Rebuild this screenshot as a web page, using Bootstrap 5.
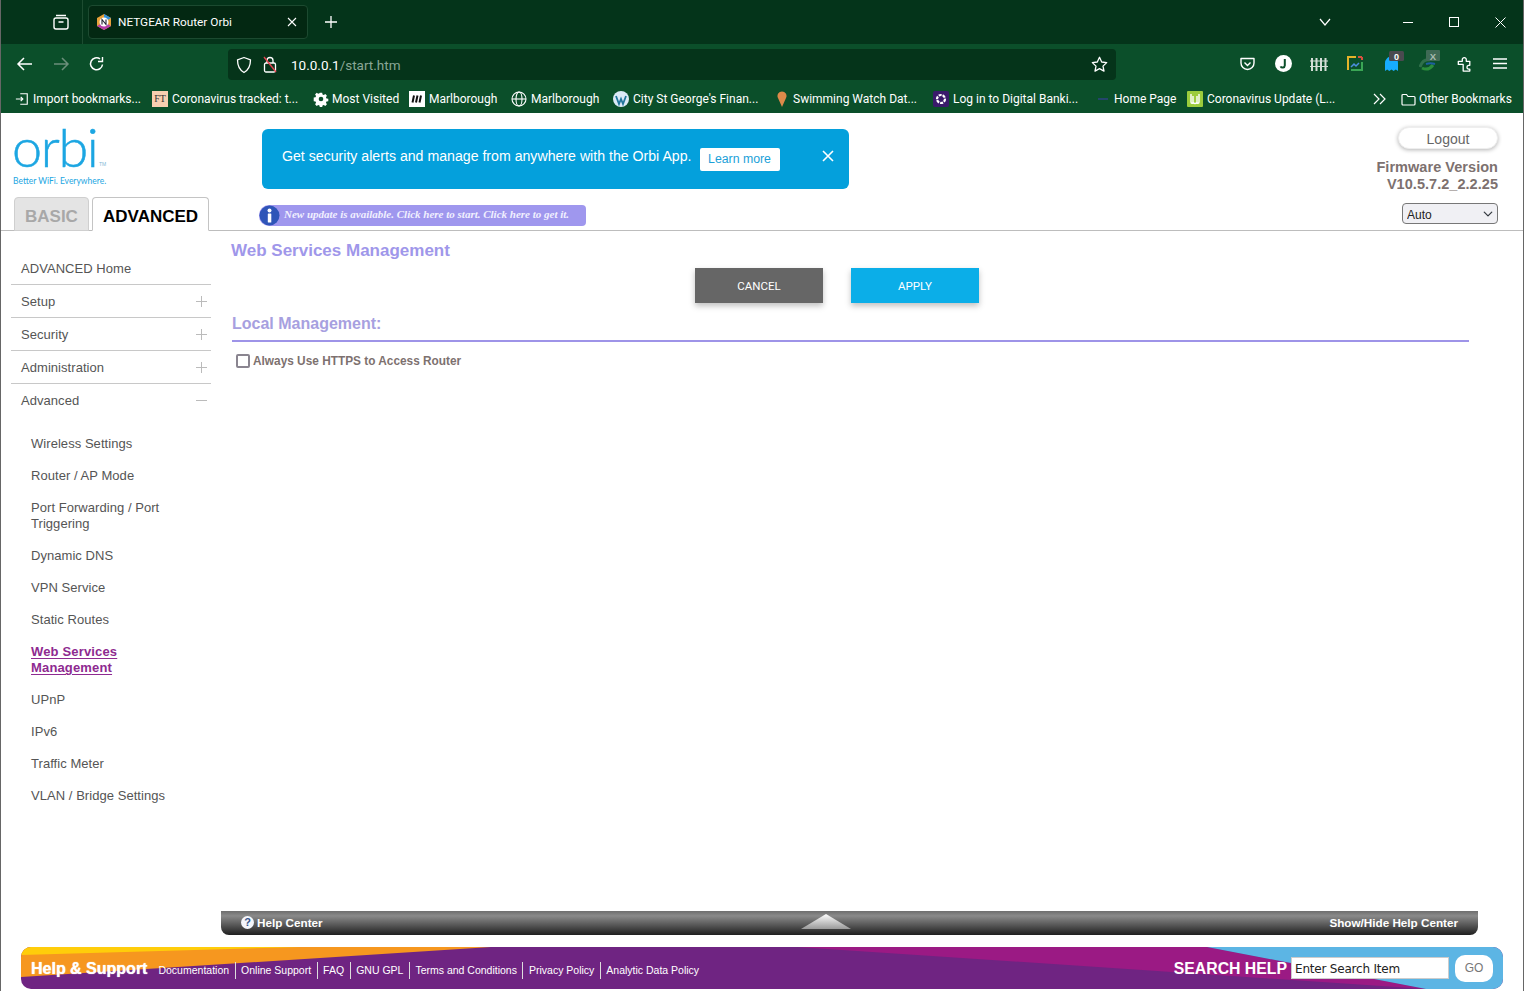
<!DOCTYPE html>
<html lang="en">
<head>
<meta charset="utf-8">
<title>NETGEAR Router Orbi</title>
<link href="https://cdn.jsdelivr.net/npm/bootstrap@5.3.0/dist/css/bootstrap.min.css" rel="stylesheet">
<style>
html,body{height:100%;margin:0;overflow:hidden;background:#fff;font-family:"Liberation Sans",Arial,sans-serif}
.shell{height:991px;display:flex;flex-direction:column;border-left:1px solid #666;border-right:1px solid #666}
.tabstrip{height:44px;background:#04341a;color:#fff;font-family:Roboto,"Noto Sans",sans-serif;font-size:11.8px;padding-top:5px;position:relative}
.tablist-ic{width:82px;border-right:1px solid #1d4c31;margin-top:-5px;height:44px}
.ftab{width:220px;height:34px;margin-left:5px;background:#032812;border:1px solid #1c4a30;border-radius:4px;padding:0 8px 0 7px}
.ftab span{padding-top:2px}
.wbtn{width:46px}
.toolbar{height:37px;background:#0b4f2a;padding-top:5px}
.urlbar{position:absolute;left:228px;top:49px;width:888px;height:31px;background:#05341a;border-radius:4px}
.urltext{font:13.5px Roboto,"Noto Sans",sans-serif;color:#8aa796}
.urltext b{font-weight:400;color:#fff}
.bookmarks{height:32px;background:#0b4f2a;color:#fff;font:12px Roboto,"Noto Sans",sans-serif;padding:4px 0 0 14px}
.bm{flex:0 0 auto;gap:3px;white-space:nowrap}
.bm svg{flex:none}
.w1{width:137px}.w2{width:161px}.w3{width:96px}.w4{width:102px}.w5{width:102px}.w6{width:162px}.w7{width:158px}.w8{width:162px}.w9{width:92px}.w10{width:186px}
.hdr{height:118px;border-bottom:1px solid #bdbdbd;flex:none}
.hdr-left{width:210px;padding-left:12px}
.orbi-mark{height:84px;position:relative;color:#1ca6e2}
.orbi-word{font:300 54px/1 Lato,sans-serif;letter-spacing:-1.4px;position:absolute;left:-1px;top:7px;-webkit-text-stroke:.5px #1ca6e2}
.orbi-tm{font-size:5px;position:absolute;left:86px;top:48px;color:#7fb9d6}
.orbi-tag{font:8.5px Lato,sans-serif;position:absolute;left:0;top:63px}
.rtabs{border:0;gap:3px;padding-left:1px}
.rtabs .nav-link{height:34px;border:1px solid #c4c4c4;border-radius:4px 4px 0 0;font-weight:700;font-size:17px;line-height:37px;padding:0 10px;margin:0}
.rtabs .tab-b{width:75px;background:#e4e4e4;color:#a8a8a8;border-color:#cfcfcf}
.rtabs .tab-a{width:117px;background:#fff;color:#000;border-bottom-color:#fff;position:relative;z-index:1}
.hdr-mid{padding-left:48px}
.promo{width:587px;height:60px;margin:16px 0 0 3px;background:#04a0dc;border-radius:6px;color:#fff;font-size:14.15px;padding-left:20px}
.promo-txt{margin-bottom:5px}
.promo-btn{width:80px;height:23px;padding:0;margin-left:8px;font-size:12.3px;line-height:23px;background:#fff;color:#1c9fd8;border:0;border-radius:2px}
.promo-x{margin:0 0 7px 42px}
.pill{width:327px;height:21px;margin-top:16px;background:#9f97ee;border-radius:10px 4px 4px 10px;font:italic 700 11px/17px "Liberation Serif",serif;color:#f1f0ff;gap:4px}
.pill span{margin-bottom:3px}
.hdr-right{margin-left:auto;padding-right:25px;text-align:right}
.logout{display:block;width:100px;height:22px;margin:14px 0 10px auto;padding:0;background:#fff;border:1px solid #eee;border-radius:11px;box-shadow:0 1px 4px rgba(0,0,0,.3);color:#666;font-size:14px;line-height:22px}
.fw{font-weight:700;font-size:14.5px;letter-spacing:.04px;line-height:17px;color:#7d716f}
.sel{width:96px;height:21px;margin:10px 0 0 auto;padding:2px 0 0 4px;font-size:12px;line-height:18px;color:#222;background-color:#f0f0f4;border:1px solid #777;border-radius:4px;background-position:right 4px center;background-size:10px}
.mainrow{flex:1 1 auto;min-height:0}
.sidenav{width:210px;flex:none;padding:21px 0 0 10px;font-size:13px;letter-spacing:.05px;color:#555}
.sidenav .list-group-item{height:33px;padding:1px 4px 0 10px;border:0;border-bottom:1px solid #c8c8c8;border-radius:0;color:#555;background:none;font-size:13px;line-height:32px}
.sub{margin-top:11px;padding-left:20px;font-size:13px;line-height:16px}
.sub a{display:block;padding:8px 30px 8px 0;color:#555;text-decoration:none}
.sub a span{color:#8e2a90;font-weight:700;letter-spacing:.16px;text-decoration:underline;text-underline-offset:2px}
.pagebody{padding:9px 0 0 20px;flex:1 1 auto}
.ptitle{font-size:17px;font-weight:700;line-height:22px;color:#9f97ea;margin:0}
.actions{margin:6px 0 0 464px;gap:28px}
.actions .btn{width:128px;height:35px;padding:1px 0 0;border:0;border-radius:0;font:11.5px Roboto,sans-serif;color:#fff;box-shadow:0 3px 6px rgba(0,0,0,.25)}
.btn-cx{background:#666}
.btn-ap{background:#0baee8}
.sect{width:1237px;margin:10px 0 0 1px;padding:1px 0 6px;border-bottom:2px solid #9e94e8;font-size:16px;font-weight:700;line-height:20px;color:#a7a0e0}
.chkrow{margin:11px 0 0 5px;gap:3px;font-size:11.85px;font-weight:700;color:#7d716f}
.chkrow .form-check-input{width:14px;height:14px;margin:0 0 3px;border:2px solid #8a8590;border-radius:2px}
.chkrow span{margin-bottom:1px}
.helpbar{height:24px;margin:0 45px 12px 220px;flex:none;background:linear-gradient(#6e6e6e,#8a8a8a 20%,#555 60%,#1f1f1f);border-radius:0 0 8px 8px;color:#fff;font-size:11.7px;font-weight:700;padding:0 20px;position:relative}
.helpq{width:13px;height:13px;border-radius:50%;background:#f4f6fb;color:#34548a;font-size:11px;line-height:13px;text-align:center;margin-right:3px}
.tri{position:absolute;left:580px;top:3px}
.footbar{height:42px;margin:0 20px 2px 20px;flex:none;position:relative;background:#6f2482;border-radius:10px;overflow:hidden;color:#fff}
.footbg{position:absolute;inset:0;width:100%;height:100%}
.footin{position:relative;height:100%;padding-left:10px}
.hs{font-size:16px;font-weight:700;margin:2px 11px 0 0;text-shadow:0 0 1px #fff}
.flinks{margin-top:4px}
.flinks a{color:#fff;text-decoration:none;font-size:10.5px;padding:0 5.5px;border-left:1px solid #ddd;line-height:17px;display:block}
.flinks a:first-child{border-left:0;padding-left:0}
.srch{margin-left:auto;padding-right:10px}
.srch b{font-size:15.8px;margin:2px 4px 0 0}
.srch input{width:158px;height:22px;border:1px solid #ccc;border-radius:0;padding:2px 3px 0;font:12px "DejaVu Sans",sans-serif;color:#222;letter-spacing:-.2px}
.gobtn{width:38px;height:27px;margin-left:6px;padding:0;border:0;background:#fff;border-radius:10px;color:#777;font-size:12px}
</style>
</head>
<body>
<div class="shell">
  <div class="tabstrip d-flex align-items-start">
    <div class="tablist-ic d-flex align-items-center justify-content-end flex-none"><svg width="18" height="18" viewBox="0 0 18 18" fill="none" stroke="#fff" stroke-width="1.4" style="margin-right:12px"><rect x="2" y="5" width="14" height="11" rx="2"/><path d="M4 2.500h10M6.500 9h5"/></svg></div>
    <div class="ftab d-flex align-items-center">
      <svg width="16" height="16" viewBox="0 0 16 16"><path d="M8 0l7 4v8l-7 4-7-4V4z" fill="#e8a13a"/><path d="M8 0l7 4-7 4z" fill="#2f8fd8"/><path d="M1 12l7 4 7-4-7-4z" fill="#b53ea8"/><circle cx="8" cy="8" r="4.500" fill="#fff"/><path d="M6 10.500v-5l4 5v-5" fill="none" stroke="#223" stroke-width="1.100"/></svg>
      <span style="margin-left:6px">NETGEAR Router Orbi</span>
      <svg class="ms-auto" width="10" height="10" viewBox="0 0 10 10" stroke="#fff" stroke-width="1.100" style="margin-right:2px"><path d="M1 1l8 8M9 1l-8 8"/></svg>
    </div>
    <svg style="margin:10px 0 0 16px" width="14" height="14" viewBox="0 0 14 14" stroke="#fff" stroke-width="1.300"><path d="M7 1v12M1 7h12"/></svg>
    <div class="ms-auto d-flex align-items-center" style="height:34px">
      <svg width="12" height="8" viewBox="0 0 12 8" fill="none" stroke="#fff" stroke-width="1.200" style="margin-right:54px"><path d="M1 1l5 6 5-6"/></svg>
      <div class="wbtn d-flex justify-content-center"><svg width="10" height="10" stroke="#fff"><path d="M0 5.500h10"/></svg></div>
      <div class="wbtn d-flex justify-content-center"><svg width="10" height="10" fill="none" stroke="#fff"><rect x=".5" y=".5" width="9" height="9"/></svg></div>
      <div class="wbtn d-flex justify-content-center"><svg width="11" height="11" stroke="#fff"><path d="M.5.5l10 10M10.500.5l-10 10"/></svg></div>
    </div>
  </div>
  <div class="toolbar position-relative d-flex align-items-start flex-none">
    <svg style="position:absolute;left:15px;top:12px" width="18" height="16" viewBox="0 0 18 16" fill="none" stroke="#fff" stroke-width="1.500"><path d="M16 8H2M8 2L2 8l6 6"/></svg>
    <svg style="position:absolute;left:51px;top:12px" width="18" height="16" viewBox="0 0 18 16" fill="none" stroke="#6c8f7b" stroke-width="1.500"><path d="M2 8h14M10 2l6 6-6 6"/></svg>
    <svg style="position:absolute;left:88px;top:12px" width="16" height="16" viewBox="0 0 16 16" fill="none" stroke="#fff" stroke-width="1.500"><path d="M13.500 8.500A6 6 0 1 1 11 2.800"/><path d="M13.500 1v4.500H9" stroke-width="1.400"/></svg>
    <svg style="position:absolute;left:1238px;top:12px" width="17" height="16" viewBox="0 0 17 16" fill="none" stroke="#fff" stroke-width="1.400"><path d="M2 2.500h13V7a6.500 6.500 0 0 1-13 0z" stroke-linejoin="round"/><path d="M5.500 6.500l3 3 3-3"/></svg>
    <svg style="position:absolute;left:1273px;top:10px" width="19" height="19" viewBox="0 0 19 19"><circle cx="9.500" cy="9.500" r="8.500" fill="#fff"/><path d="M10.800 5v6.500a2.200 2.200 0 0 1-4.200.8" fill="none" stroke="#0b4f2a" stroke-width="2"/></svg>
    <svg style="position:absolute;left:1309px;top:13px" width="18" height="14" viewBox="0 0 18 14" stroke="#d5ded8" stroke-width="2" fill="none"><path d="M2 1v13M6.500 1v13M11 1v13M15.500 1v13"/><path d="M0 4h18M0 9.500h18" stroke-width="1.200"/></svg>
    <svg style="position:absolute;left:1346px;top:12px" width="16" height="15" viewBox="0 0 16 15" fill="none"><path d="M1 14V1h8" stroke="#e5b32a" stroke-width="2"/><path d="M15 6v8H4" stroke="#3aa655" stroke-width="2"/><path d="M15 1h-4M15 1v3" stroke="#d9503f" stroke-width="2"/><path d="M4 11l3-3 2 2 3-3" stroke="#4c8fe0" stroke-width="1.500"/></svg>
    <svg style="position:absolute;left:1384px;top:13px" width="13" height="14" viewBox="0 0 13 14"><path d="M0 14V6a6 6 0 0 1 13 0v8l-2.200-1.500-2.200 1.500-2.100-1.500-2.200 1.500-2.100-1.500z" fill="#17adff"/></svg>
    <svg style="position:absolute;left:1388px;top:7px" width="15" height="10" viewBox="0 0 15 10"><rect width="15" height="10" rx="1.500" fill="#4a4a50"/><text x="7.500" y="8.500" text-anchor="middle" font-size="9" font-weight="700" font-family="Liberation Sans" fill="#fff">0</text></svg>
    <svg style="position:absolute;left:1418px;top:12px" width="20" height="15" viewBox="0 0 20 15" fill="none"><path d="M1 11c2-6 6-8 10-7" stroke="#2f6f4a" stroke-width="3"/><path d="M3 12c4 2 8 1 11-3" stroke="#2b8d3c" stroke-width="3"/><path d="M7 8c3-1 6-1 9 0" stroke="#1d5fa0" stroke-width="2"/></svg>
    <svg style="position:absolute;left:1425px;top:6px" width="14" height="11" viewBox="0 0 14 11"><rect width="14" height="11" rx="1" fill="#3f6a55"/><text x="7" y="9.500" text-anchor="middle" font-size="9.500" font-weight="700" font-family="Liberation Sans" fill="#a9bdb1">X</text></svg>
    <svg style="position:absolute;left:1456px;top:12px" width="15" height="16" viewBox="0 0 17 18" fill="none" stroke="#fff" stroke-width="1.500" stroke-linejoin="round"><path d="M1.500 9.500V6H6V4.500a2.300 2.300 0 1 1 4.500 0V6h4v4.500H13a2.200 2.200 0 0 0 0 4.300h1.500V17H7V9.500z"/></svg>
    <svg style="position:absolute;left:1492px;top:14px" width="14" height="11" viewBox="0 0 14 11" stroke="#fff" stroke-width="1.300"><path d="M0 1h14M0 5.500h14M0 10h14"/></svg>
  </div>
  <div class="urlbar d-flex align-items-center">
    <svg style="margin-left:8px" width="16" height="18" viewBox="0 0 16 18" fill="none" stroke="#fff" stroke-width="1.300"><path d="M8 1.500l6.500 2.300c0 6-1.500 10-6.500 12.700C3 13.800 1.500 9.800 1.500 3.800z" stroke-linejoin="round"/></svg>
    <svg style="margin-left:11px" width="14" height="17" viewBox="0 0 14 17" fill="none" stroke="#fff" stroke-width="1.300"><rect x="1.500" y="7" width="11" height="9" rx="1.500"/><path d="M4 7V4.500a3 3 0 0 1 6 0V7"/><path d="M1 1l12 15" stroke="#e0424f" stroke-width="1.400"/></svg>
    <span class="urltext" style="margin-left:14px"><b>10.0.0.1</b>/start.htm</span>
    <svg class="ms-auto" style="margin-right:8px" width="17" height="17" viewBox="0 0 17 17" fill="none" stroke="#fff" stroke-width="1.300" stroke-linejoin="round"><path d="M8.500 1.300l2.200 4.700 5 .6-3.700 3.500 1 5-4.500-2.500L4 15.100l1-5L1.300 6.600l5-.6z"/></svg>
  </div>
  <div class="bookmarks d-flex align-items-center flex-none">
    <div class="bm d-flex align-items-center w1"><svg width="14" height="14" viewBox="0 0 16 14" fill="none" stroke="#fff" stroke-width="1.300" style="margin-right:1px"><path d="M6 1h8v12H6"/><path d="M1 7h8M6.500 4.500L9 7l-2.500 2.500"/></svg><span>Import bookmarks...</span></div>
    <div class="bm d-flex align-items-center w2"><svg width="16" height="16" viewBox="0 0 16 16"><rect width="16" height="16" fill="#f8cfb0"/><text x="8" y="11" text-anchor="middle" font-family="Liberation Serif" font-size="10" fill="#333">FT</text></svg><span style="margin-left:1px">Coronavirus tracked: t...</span></div>
    <div class="bm d-flex align-items-center w3"><svg width="16" height="16" viewBox="0 0 16 16" fill="#fff"><path d="M6.700 1h2.600l.4 2 1.400.6 1.700-1.100 1.800 1.800-1.100 1.700.6 1.400 2 .4v2.600l-2 .4-.6 1.400 1.100 1.700-1.800 1.800-1.700-1.100-1.400.6-.4 2H6.700l-.4-2-1.400-.6-1.700 1.100-1.800-1.800 1.100-1.700-.6-1.400-2-.4V6.400l2-.4.6-1.400-1.100-1.700 1.800-1.800 1.700 1.100 1.400-.6z" transform="translate(.8 .8) scale(.9)"/><circle cx="8" cy="8" r="2.300" fill="#0b4f2a"/></svg><span>Most Visited</span></div>
    <div class="bm d-flex align-items-center w4"><svg width="16" height="16" viewBox="0 0 16 16"><rect width="16" height="16" fill="#fff"/><path d="M3.500 11.500l1.500-7M7 11.500l1.500-7M10.500 11.500l1.500-7" stroke="#111" stroke-width="2"/></svg><span style="margin-left:1px">Marlborough</span></div>
    <div class="bm d-flex align-items-center w5"><svg width="16" height="16" viewBox="0 0 16 16" fill="none" stroke="#fff" stroke-width="1.100"><circle cx="8" cy="8" r="7"/><ellipse cx="8" cy="8" rx="3" ry="7"/><path d="M1 8h14"/></svg><span style="margin-left:1px">Marlborough</span></div>
    <div class="bm d-flex align-items-center w6"><svg width="16" height="16" viewBox="0 0 16 16"><circle cx="8" cy="8" r="8" fill="#dbe9f6"/><path d="M3 5l3 8 2-5 2 5 3-8" fill="none" stroke="#21759b" stroke-width="1.800"/></svg><span style="margin-left:1px">City St George's Finan...</span></div>
    <div class="bm d-flex align-items-center w7"><svg width="12" height="18" viewBox="0 0 12 18" style="margin:0 2px 0 1px"><path d="M6 17L2 8a4.500 4.500 0 1 1 8 0z" fill="#dd8a4a"/></svg><span>Swimming Watch Dat...</span></div>
    <div class="bm d-flex align-items-center w8"><svg width="16" height="16" viewBox="0 0 16 16"><rect width="16" height="16" rx="2" fill="#3a1a6b"/><circle cx="8" cy="8" r="4" fill="none" stroke="#fff" stroke-width="2.200" stroke-dasharray="3 1"/></svg><span style="margin-left:1px">Log in to Digital Banki...</span></div>
    <div class="bm d-flex align-items-center w9"><svg width="16" height="16" viewBox="0 0 16 16"><path d="M3 8h10" stroke="#24466b" stroke-width="2"/></svg><span>Home Page</span></div>
    <div class="bm d-flex align-items-center w10"><svg width="16" height="16" viewBox="0 0 16 16"><rect width="16" height="16" rx="1" fill="#9ccc3c"/><path d="M4 3v8c0 1.500 2 2 2 0V5m0 6c0 2 4 2 4 0V5m0 6c0 2 2 1.500 2 0V3" fill="none" stroke="#fff" stroke-width="1.400"/></svg><span style="margin-left:1px">Coronavirus Update (L...</span></div>
    <svg width="14" height="12" viewBox="0 0 14 12" fill="none" stroke="#fff" stroke-width="1.200" style="margin-right:14px"><path d="M1 1l5 5-5 5M7 1l5 5-5 5"/></svg>
    <div class="bm d-flex align-items-center"><svg width="15" height="13" viewBox="0 0 15 13" fill="none" stroke="#fff" stroke-width="1.200"><path d="M1 11V2.500A1 1 0 0 1 2 1.500h3.500l1.500 2h6a1 1 0 0 1 1 1V11a1 1 0 0 1-1 1H2a1 1 0 0 1-1-1z"/></svg><span>Other Bookmarks</span></div>
  </div>

  <div class="hdr d-flex">
    <div class="hdr-left flex-none">
      <div class="orbi-mark">
        <span class="orbi-word">orbi</span>
        <span class="orbi-tm">TM</span>
        <span class="orbi-tag">Better WiFi. Everywhere.</span>
      </div>
      <ul class="nav nav-tabs rtabs">
        <li class="nav-item"><a class="nav-link tab-b" href="#">BASIC</a></li>
        <li class="nav-item"><a class="nav-link tab-a" href="#">ADVANCED</a></li>
      </ul>
    </div>
    <div class="hdr-mid">
      <div class="promo d-flex align-items-center">
        <span class="promo-txt">Get security alerts and manage from anywhere with the Orbi App.</span>
        <button class="btn promo-btn" type="button">Learn more</button>
        <svg class="promo-x" width="12" height="12" viewBox="0 0 12 12" stroke="#fff" stroke-width="1.600"><path d="M1 1l10 10M11 1L1 11"/></svg>
      </div>
      <div class="pill d-flex align-items-center">
        <svg width="21" height="21" viewBox="0 0 21 21" style="flex:none"><circle cx="10.500" cy="10.500" r="10" fill="#2f55b8"/><circle cx="10.500" cy="5.500" r="2" fill="#fff"/><rect x="8.800" y="8.500" width="3.500" height="9" rx=".5" fill="#fff"/></svg>
        <span>New update is available. Click here to start. Click here to get it.</span>
      </div>
    </div>
    <div class="hdr-right">
      <button class="logout" type="button">Logout</button>
      <div class="fw">Firmware Version</div>
      <div class="fw">V10.5.7.2_2.2.25</div>
      <select class="form-select sel" aria-label="Language"><option>Auto</option></select>
    </div>
  </div>

  <div class="mainrow d-flex">
    <nav class="sidenav">
      <div class="list-group list-group-flush">
        <a class="list-group-item" href="#">ADVANCED Home</a>
        <a class="list-group-item d-flex justify-content-between align-items-center" href="#">Setup<svg width="11" height="11" stroke="#bbb"><path d="M5.500 0v11M0 5.500h11"/></svg></a>
        <a class="list-group-item d-flex justify-content-between align-items-center" href="#">Security<svg width="11" height="11" stroke="#bbb"><path d="M5.500 0v11M0 5.500h11"/></svg></a>
        <a class="list-group-item d-flex justify-content-between align-items-center" href="#">Administration<svg width="11" height="11" stroke="#bbb"><path d="M5.500 0v11M0 5.500h11"/></svg></a>
        <a class="list-group-item d-flex justify-content-between align-items-center" href="#">Advanced<svg width="11" height="11" stroke="#bbb"><path d="M0 4.500h11"/></svg></a>
      </div>
      <div class="sub">
        <a href="#">Wireless Settings</a>
        <a href="#">Router / AP Mode</a>
        <a href="#">Port Forwarding / Port Triggering</a>
        <a href="#">Dynamic DNS</a>
        <a href="#">VPN Service</a>
        <a href="#">Static Routes</a>
        <a href="#"><span>Web Services Management</span></a>
        <a href="#">UPnP</a>
        <a href="#">IPv6</a>
        <a href="#">Traffic Meter</a>
        <a href="#">VLAN / Bridge Settings</a>
      </div>
    </nav>
    <main class="pagebody">
      <h1 class="ptitle">Web Services Management</h1>
      <div class="actions d-flex">
        <button class="btn btn-cx" type="button">CANCEL</button>
        <button class="btn btn-ap" type="button">APPLY</button>
      </div>
      <div class="sect">Local Management:</div>
      <label class="chkrow d-flex align-items-center"><input class="form-check-input" type="checkbox"><span>Always Use HTTPS to Access Router</span></label>
    </main>
  </div>

  <div class="helpbar d-flex align-items-center justify-content-between">
    <span class="d-flex align-items-center"><span class="helpq">?</span>Help Center</span>
    <svg class="tri" width="50" height="15" viewBox="0 0 50 15"><defs><linearGradient id="tg" x1="0" y1="0" x2="0" y2="1"><stop offset="0" stop-color="#fff"/><stop offset="1" stop-color="#9a9a9a"/></linearGradient></defs><path d="M25 0l25 15H0z" fill="url(#tg)"/></svg>
    <span>Show/Hide Help Center</span>
  </div>
  <div class="footbar">
    <svg class="footbg" viewBox="0 0 1482 42" preserveAspectRatio="none"><path d="M776 0h410l219 42z" fill="#9b1a84"/><path d="M1186 0h296v42h-77z" fill="#5cb5e4"/><path d="M0 0h470L0 30z" fill="#f6971f"/><path d="M0 0h280L0 8z" fill="#ffcd0a"/></svg>
    <div class="footin d-flex align-items-center">
      <span class="hs">Help &amp; Support</span>
      <div class="flinks d-flex align-items-center">
        <a href="#">Documentation</a><a href="#">Online Support</a><a href="#">FAQ</a><a href="#">GNU GPL</a><a href="#">Terms and Conditions</a><a href="#">Privacy Policy</a><a href="#">Analytic Data Policy</a>
      </div>
      <div class="srch d-flex align-items-center">
        <b>SEARCH HELP</b>
        <input type="text" value="Enter Search Item" aria-label="Search help">
        <button class="gobtn" type="button">GO</button>
      </div>
    </div>
  </div>
</div>
</body>
</html>
